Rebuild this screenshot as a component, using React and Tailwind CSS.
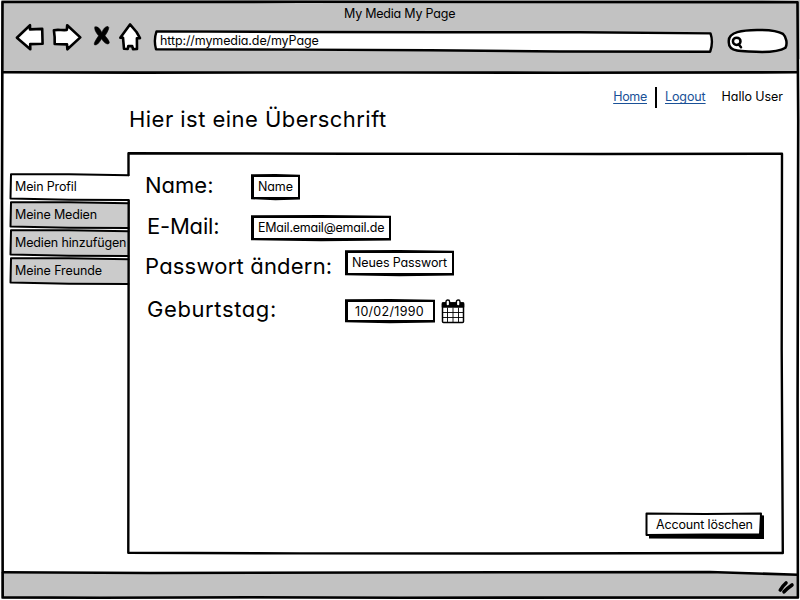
const SMALL = "whitespace-nowrap text-[12.5px] leading-4";

function Drawing({ box, className = "", children, stroke = 2.6 }) {
  return (
    <svg
      viewBox={box}
      preserveAspectRatio="none"
      fill="none"
      stroke="#000"
      strokeWidth={stroke}
      strokeLinejoin="round"
      strokeLinecap="round"
      className={`pointer-events-none overflow-visible ${className}`}
      aria-hidden="true"
    >
      {children}
    </svg>
  );
}

function Toolbar() {
  return (
    <div className="ml-[14px] flex h-8">
      <Drawing box="14 22 32 32" className="h-8 w-8">
        <path fill="#fff" d="M16.9 37.7 30 25.2V29.4L42.2 28.9 42.6 43.8 30.2 44.1 30.3 49.2Z" />
      </Drawing>
      <Drawing box="50 22 32 32" className="ml-1 h-8 w-8">
        <path fill="#fff" d="M53.9 30.2C58 29.4 62 30.4 66.8 30L67.2 25.2 80.3 37.4 67.4 49.3 67 44.4 54.7 44Q55 37 53.9 30.2Z" />
      </Drawing>
      <Drawing box="92 22 20 32" className="ml-[10px] h-8 w-5" stroke={0.6}>
        <path
          fill="#000"
          d="M95 27Q98.500 25.500 101.800 32.500 104.500 26 108 26.500 110.500 27.500 105 35.800 110.500 42 109 43.500 106 45.500 101.500 38.800 97.500 46 94.500 44.800 93.200 43.500 98.600 35.800 93.500 29.500 95 27Z"
        />
      </Drawing>
      <Drawing box="118 22 24 32" className="ml-[6px] h-8 w-6">
        <path fill="#fff" d="M130 24.4 120.3 37.7H123L124 48.8 127.7 49 128.300 46 132.200 46.100 133 49.300 137 48.900 136.900 38.200 140 38.100 136.500 32Z" />
      </Drawing>
      <div className="relative ml-[10px] h-8 w-[562px]">
        <Drawing box="152 22 562 32" className="absolute inset-0 h-full w-full" stroke={2.4}>
          <path fill="#fff" d="M156.500 31.400 300 32 440 32.200 580 32.200 710.500 33.400Q713.500 42 710.200 51.700L560 51.500 430 50.300 300 49.600 156 49.200Q153.500 40 156.500 31.400Z" />
        </Drawing>
        <span className={`relative ml-[8px] mt-[11px] block tracking-[-0.11px] ${SMALL}`}>http://mymedia.de/myPage</span>
      </div>
      <Drawing box="726 22 64 32" className="ml-3 h-8 w-16" stroke={2.5}>
        <path fill="#fff" d="M728.800 41.500C728 32 743 30 757 29.900 772 29.700 779 31.500 783 33.800 786.500 37 787.500 44 785.500 47.700 781 50.500 772 52 762 52 750 51.200 742 51.500 737 50.600 731 49.500 728.500 46 728.800 41.500Z" />
        <ellipse cx="736.700" cy="41.300" rx="3.800" ry="3.600" />
        <path d="M738.800 44.500 741 47.200" />
      </Drawing>
    </div>
  );
}

function Tab({ label, active, className = "" }) {
  return (
    <li className="relative h-7 pl-[6px] pt-[6px]">
      <Drawing box="0 0 118 28" className="absolute inset-0 h-full w-full" stroke={2}>
        <path
          fill={active ? "#fff" : "#cbcbcb"}
          d="M119.500 2.300 60 1.300 2 1.200 1.500 25.600 60 26.700 119.500 27"
        />
      </Drawing>
      <span className={`relative block ${SMALL} ${className}`}>{label}</span>
    </li>
  );
}

function Field({ value, className, textClass }) {
  return (
    <div className={`relative ${className}`}>
      <Drawing box="0 0 100 26" className="absolute inset-0 h-full w-full" stroke={0}>
        <path fill="#000" stroke="none" d="M0 0.300 50 0 100 0.800V25.500L50 26.300 0 25.200Z" />
      </Drawing>
      <div className="absolute inset-x-[2.500px] bottom-[3px] top-[2.500px] bg-white" />
      <span className={`relative block ${SMALL} ${textClass}`}>{value}</span>
    </div>
  );
}

function Calendar({ className }) {
  return (
    <Drawing box="0 0 24 25" className={`h-[25px] w-6 ${className}`} stroke={1.500}>
      <path fill="#fff" d="M1.500 5Q1.500 4 2.500 4H21.500Q22.500 4 22.500 5V22.500Q22.500 23.500 21.500 23.500H2.500Q1.500 23.500 1.500 22.500Z" />
      <path fill="#000" d="M1.500 4H22.500V8H1.500Z" />
      <path strokeWidth="0.900" d="M1.500 13.500H22.500M1.500 18.500H22.500M6.500 9V23M12 9V23M17.500 9V23" />
      <rect fill="#fff" strokeWidth="1.400" x="5" y="1" width="3.600" height="6" rx="1.700" />
      <rect fill="#fff" strokeWidth="1.400" x="15.400" y="1" width="3.600" height="6" rx="1.700" />
    </Drawing>
  );
}

const LABEL = "shrink-0 whitespace-nowrap text-[22px] leading-7";

export default function App() {
  return (
    <div
      className="relative flex h-[600px] w-[800px] flex-col overflow-hidden bg-white text-black"
      style={{ fontFamily: 'Inter, "Liberation Sans", sans-serif', fontFeatureSettings: '"cv11"' }}
    >
      <header className="relative h-[73px] shrink-0 bg-[#c2c2c2] pt-[6px]">
        <div className={`ml-[344px] tracking-[-0.22px] ${SMALL}`}>My Media My Page</div>
        <Toolbar />
        <Drawing box="0 0 800 73" className="absolute inset-0 h-full w-full">
          <path d="M3 72.300 140 72.600 400 72.500 560 72.700 798 72.300" />
        </Drawing>
      </header>

      <div className="flex h-[78px] shrink-0 items-start justify-between">
        <h1 className="ml-[129px] mt-[32px] whitespace-nowrap text-[22px] leading-7 tracking-[0.46px]">
          Hier ist eine Überschrift
        </h1>
        <nav className="mr-[17px] mt-[13px] flex h-[22px] items-center">
          <a className={`text-[#1a5197] underline decoration-1 underline-offset-[2px] tracking-[-0.3px] [text-decoration-skip-ink:none] ${SMALL}`}>Home</a>
          <span className="ml-2 h-[21px] w-[2px] bg-black" />
          <a className={`ml-2 text-[#1a5197] underline decoration-1 underline-offset-[2px] tracking-[-0.1px] [text-decoration-skip-ink:none] ${SMALL}`}>Logout</a>
          <span className={`ml-4 tracking-[-0.05px] ${SMALL}`}>Hallo User</span>
        </nav>
      </div>

      <div className="flex h-[421px] shrink-0 items-start">
        <ul className="ml-[9px] mt-[22px] w-[118px] shrink-0">
          <Tab label="Mein Profil" active className="tracking-[-0.15px]" />
          <Tab label="Meine Medien" className="tracking-[-0.15px]" />
          <Tab label="Medien hinzufügen" className="tracking-[-0.15px]" />
          <Tab label="Meine Freunde" className="tracking-[-0.1px]" />
        </ul>

        <main className="relative flex h-[405px] w-[658px] flex-col pt-[19px]">
          <Drawing box="127 151 658 405" className="absolute inset-0 h-full w-full" stroke={2.400}>
            <path d="M128.500 175V153.300L350 153.700 600 154 782 153.800 781.700 350 782.800 553 500 553.500 300 553.400 128.300 552.800 128.700 200.500" />
          </Drawing>

          <div className="flex h-[41px] items-start">
            <label className={`ml-[18px] mt-px w-[106px] ${LABEL}`}>Name:</label>
            <Field value="Name" className="mt-[4px] h-[26px] w-[49px]" textClass="pl-[7px] pt-[5px] tracking-[-0.1px]" />
          </div>
          <div className="flex h-[39px] items-start">
            <label className={`ml-[20px] mt-px w-[104px] tracking-[-0.2px] ${LABEL}`}>E-Mail:</label>
            <Field value="EMail.email@email.de" className="mt-[4px] h-[26px] w-[140px]" textClass="pl-[7px] pt-[5px] tracking-[-0.22px]" />
          </div>
          <div className="flex h-[45px] items-start">
            <label className={`ml-[18px] mt-[2px] w-[200px] tracking-[0.2px] ${LABEL}`}>Passwort ändern:</label>
            <Field value="Neues Passwort" className="h-[26px] w-[109px]" textClass="pl-[7px] pt-[5px] tracking-[-0.12px]" />
          </div>
          <div className="flex items-start">
            <label className={`ml-[20px] w-[198px] tracking-[0.6px] ${LABEL}`}>Geburtstag:</label>
            <Field value="10/02/1990" className="mt-[4px] h-[24px] w-[90px]" textClass="pl-[10px] pt-[5px] tracking-[0.3px]" />
            <Calendar className="ml-[6px] mt-[4px]" />
          </div>

          <button className="relative mb-[17px] ml-auto mr-[20px] mt-auto h-[27px] w-[120px]">
            <Drawing box="0 0 120 27" className="absolute inset-0 h-full w-full" stroke={2}>
              <path fill="#000" stroke="none" d="M4 10 114 3 119 3.500 119 27 4 26.500Z" />
              <path fill="#fff" d="M1.500 1.500 60 2 116 1.500 115 22.300 60 22.500 1.500 23Z" />
            </Drawing>
            <span className={`relative -mt-px block pl-[11px] text-left tracking-[-0.15px] ${SMALL}`}>Account löschen</span>
          </button>
        </main>
      </div>

      <footer className="relative h-[28px] shrink-0 bg-[#c2c2c2]">
        <Drawing box="0 572 800 28" className="absolute inset-0 h-full w-full">
          <path fill="#fff" stroke="none" d="M0 571H800V575L700 572.500Z" />
          <path d="M3 572.300 150 573 500 572.200 710 572 798 574.800" />
          <path strokeWidth="3.600" d="M780.300 590Q782.500 586 786 583M784 591.800Q787 588.500 792 585" />
        </Drawing>
      </footer>

      <Drawing box="0 0 800 600" className="absolute inset-0 h-full w-full">
        <path stroke="#fff" strokeWidth="2" d="M0 0V600" />
        <path stroke="#fff" strokeWidth="2" d="M0 600H800V60" />
        <path d="M2.500 2 300 1.800 797.500 2.200 798.200 120 797.600 400 797.900 597.500 400 597.700 250 597.200 100 597.800 2.700 597.400 2.300 400 2 200Z" />
      </Drawing>
    </div>
  );
}
